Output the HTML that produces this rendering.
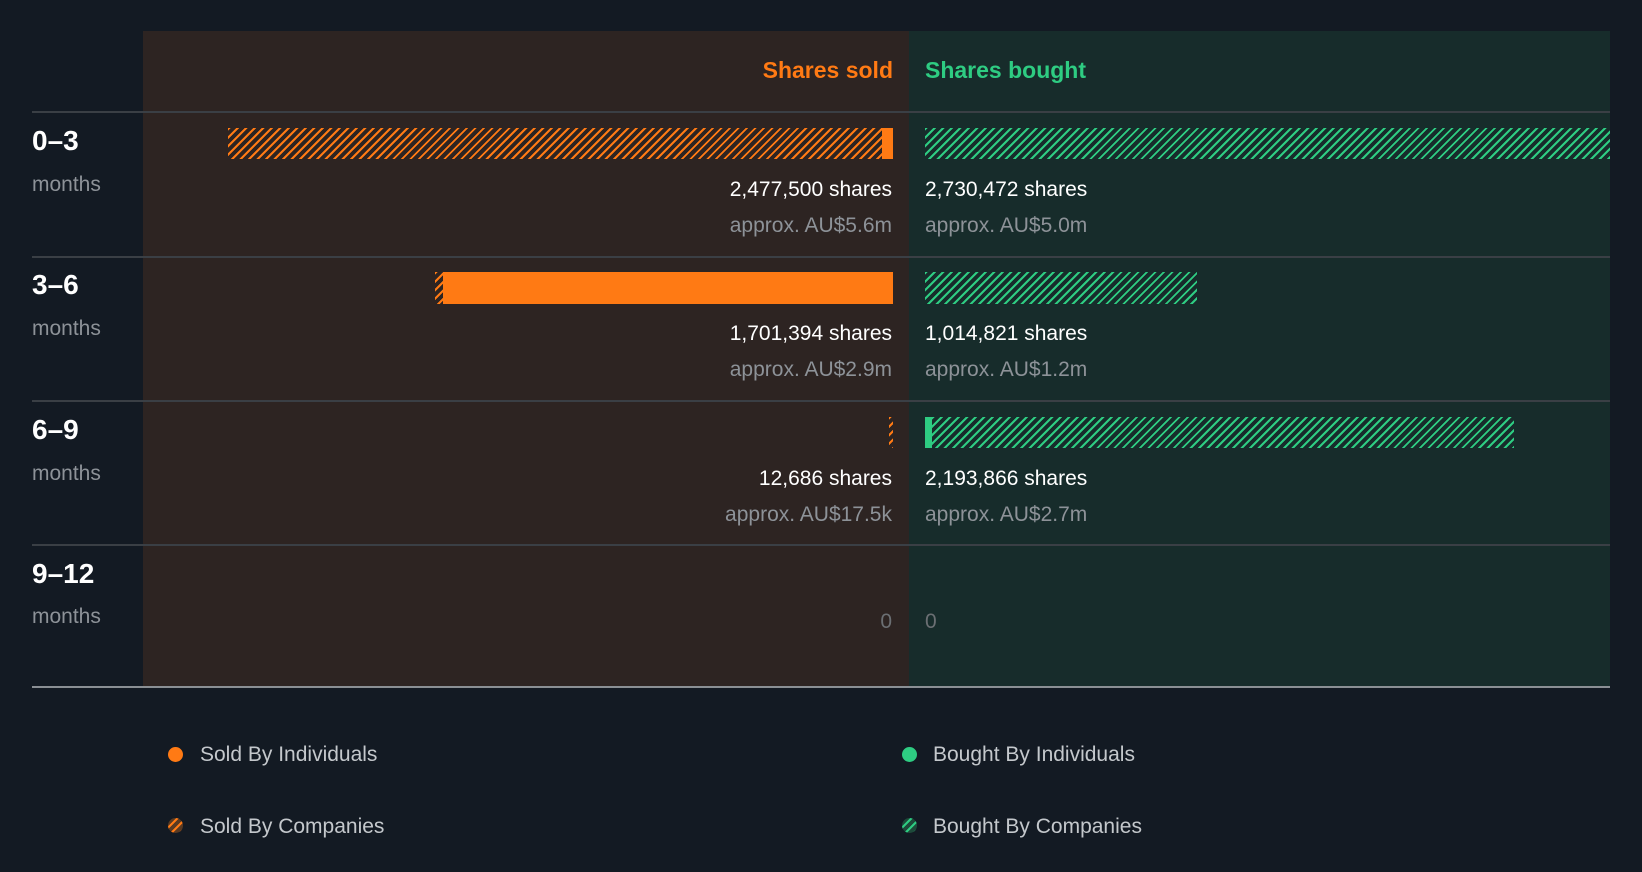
<!DOCTYPE html>
<html><head><meta charset="utf-8"><style>
*{margin:0;padding:0;box-sizing:border-box}
body{width:1642px;height:872px;background:#131a23;font-family:"Liberation Sans",sans-serif;position:relative;overflow:hidden}
.a{position:absolute}
.hl{background:repeating-linear-gradient(135deg,#ff7a14 0 2px,transparent 2px 6px)}
.hr{background:repeating-linear-gradient(135deg,#2ecc82 0 2px,transparent 2px 6px)}
.line{position:absolute;left:32px;width:1578px;height:2px;background:#3a3f45}
.lab{position:absolute;left:32px;color:#fff;font-weight:bold;font-size:28px}
.mo{position:absolute;left:32px;color:#8d9298;font-size:21px}
.sr{position:absolute;right:750px;text-align:right;color:#fff;font-size:21px;white-space:nowrap}
.sl{position:absolute;left:925px;color:#fff;font-size:21px;white-space:nowrap}
.g{color:#8d9298}
.lg{position:absolute;color:#c4c8cc;font-size:21px}
.dot{position:absolute;width:15px;height:15px;border-radius:50%}
</style></head><body>
<div class="a" style="left:143px;top:31px;width:766px;height:656px;background:#2d2422"></div>
<div class="a" style="left:909px;top:31px;width:701px;height:656px;background:#172c2b"></div>
<div class="a" style="right:749px;top:57px;color:#ff7a14;font-weight:bold;font-size:23px">Shares sold</div>
<div class="a" style="left:925px;top:57px;color:#2ecc82;font-weight:bold;font-size:23px">Shares bought</div>
<div class="line" style="top:111px"></div>
<div class="line" style="top:256px"></div>
<div class="line" style="top:400px"></div>
<div class="line" style="top:544px"></div>
<div class="a" style="left:32px;top:686px;width:1578px;height:2px;background:#8a8f94"></div>

<div class="lab" style="top:125px">0–3</div><div class="mo" style="top:173px">months</div>
<div class="lab" style="top:269px">3–6</div><div class="mo" style="top:317px">months</div>
<div class="lab" style="top:414px">6–9</div><div class="mo" style="top:462px">months</div>
<div class="lab" style="top:558px">9–12</div><div class="mo" style="top:605px">months</div>

<div class="a hl" style="left:228px;top:128px;width:654px;height:31px"></div>
<div class="a" style="left:882px;top:128px;width:11px;height:31px;background:#ff7a14"></div>
<div class="a hr" style="left:925px;top:128px;width:685px;height:31px"></div>
<div class="sr" style="top:178px">2,477,500 shares</div><div class="sr g" style="top:214px">approx. AU$5.6m</div>
<div class="sl" style="top:178px">2,730,472 shares</div><div class="sl g" style="top:214px">approx. AU$5.0m</div>

<div class="a hl" style="left:435px;top:272px;width:8px;height:32px"></div>
<div class="a" style="left:443px;top:272px;width:450px;height:32px;background:#ff7a14"></div>
<div class="a hr" style="left:925px;top:272px;width:272px;height:32px"></div>
<div class="sr" style="top:322px">1,701,394 shares</div><div class="sr g" style="top:358px">approx. AU$2.9m</div>
<div class="sl" style="top:322px">1,014,821 shares</div><div class="sl g" style="top:358px">approx. AU$1.2m</div>

<div class="a hl" style="left:889px;top:417px;width:4px;height:31px"></div>
<div class="a" style="left:925px;top:417px;width:7px;height:31px;background:#2ecc82"></div>
<div class="a hr" style="left:932px;top:417px;width:582px;height:31px"></div>
<div class="sr" style="top:467px">12,686 shares</div><div class="sr g" style="top:503px">approx. AU$17.5k</div>
<div class="sl" style="top:467px">2,193,866 shares</div><div class="sl g" style="top:503px">approx. AU$2.7m</div>

<div class="sr" style="top:610px;color:#6b6f73">0</div>
<div class="sl" style="top:610px;color:#6b6f73">0</div>

<div class="dot" style="left:168px;top:747px;background:#ff7a14"></div>
<div class="lg" style="left:200px;top:743px">Sold By Individuals</div>
<div class="dot hl" style="left:168px;top:818px;background-color:#5a3a22"></div>
<div class="lg" style="left:200px;top:815px">Sold By Companies</div>
<div class="dot" style="left:902px;top:747px;background:#2ecc82"></div>
<div class="lg" style="left:933px;top:743px">Bought By Individuals</div>
<div class="dot hr" style="left:902px;top:818px;background-color:#1d4a3a"></div>
<div class="lg" style="left:933px;top:815px">Bought By Companies</div>
</body></html>
